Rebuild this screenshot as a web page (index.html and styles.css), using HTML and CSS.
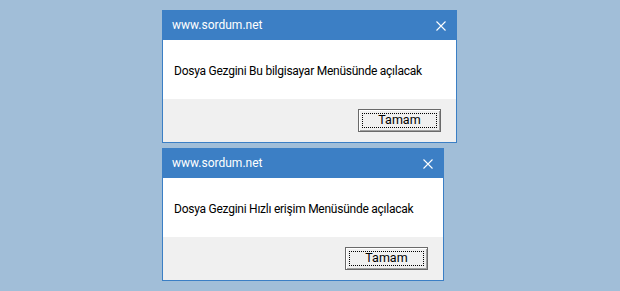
FILE: index.html
```html
<!DOCTYPE html>
<html lang="tr">
<head>
<meta charset="utf-8">
<title>sordum.net</title>
<link rel="stylesheet" href="styles.css">
</head>
<body>
<div class="stack">
  <div class="dialog dialog-wide">
    <div class="titlebar">
      <span class="title">www.sordum.net</span>
      <svg class="close" width="10" height="10" viewBox="0 0 10 10"><path d="M0.5 0.5 L9.5 9.5 M9.5 0.5 L0.5 9.5" stroke="#fff" stroke-width="1.1" fill="none"/></svg>
    </div>
    <div class="content">Dosya Gezgini Bu bilgisayar Menüsünde açılacak</div>
    <div class="footer"><button class="btn"><span class="btn-focus">Tamam</span></button></div>
  </div>
  <div class="dialog dialog-narrow">
    <div class="titlebar">
      <span class="title">www.sordum.net</span>
      <svg class="close" width="10" height="10" viewBox="0 0 10 10"><path d="M0.5 0.5 L9.5 9.5 M9.5 0.5 L0.5 9.5" stroke="#fff" stroke-width="1.1" fill="none"/></svg>
    </div>
    <div class="content">Dosya Gezgini Hızlı erişim Menüsünde açılacak</div>
    <div class="footer"><button class="btn"><span class="btn-focus">Tamam</span></button></div>
  </div>
</div>
</body>
</html>
```
FILE: styles.css
```css
html, body {
  margin: 0;
  padding: 0;
}
body {
  background: #a1bed8;
  width: 620px;
  height: 291px;
  overflow: hidden;
  font-family: Roboto, "Noto Sans", sans-serif;
}
.stack {
  display: flex;
  flex-direction: column;
  gap: 5px;
  padding: 10px 0 0 162px;
}
.dialog {
  border: 1px solid #3b7fc5;
  background: #f0f0f0;
  display: flex;
  flex-direction: column;
}
.dialog-wide { width: 293px; }
.dialog-narrow { width: 280px; }
.titlebar {
  height: 29px;
  background: #3c7fc5;
  color: #fff;
  display: flex;
  align-items: center;
  justify-content: space-between;
  padding: 0 10px 0 9px;
  font-size: 12px;
}
.title {
  line-height: 29px;
}
.close {
  display: block;
  margin-top: 1px;
}
.content {
  height: 59px;
  background: #fff;
  display: flex;
  align-items: center;
  padding-left: 11px;
  font-size: 12px;
  letter-spacing: -0.25px;
  color: #000;
  padding-top: 2px;
  box-sizing: border-box;
}
.footer {
  height: 43px;
  display: flex;
  justify-content: flex-end;
  align-items: center;
  padding-right: 15px;
}
.btn {
  width: 83px;
  height: 23px;
  margin: 0;
  padding: 0;
  border: 1px solid #6a6a6a;
  background: #f0f0f0;
  box-shadow: inset 1px 1px 0 #ffffff, inset -1px -1px 0 #a0a0a0;
  display: flex;
  align-items: stretch;
  justify-content: stretch;
  font-family: inherit;
  font-size: 12.5px;
  color: #000;
}
.btn-focus {
  flex: 1;
  margin: 3px;
  border: 1px dotted #000;
  display: flex;
  align-items: center;
  justify-content: center;
  line-height: 1;
}
```
